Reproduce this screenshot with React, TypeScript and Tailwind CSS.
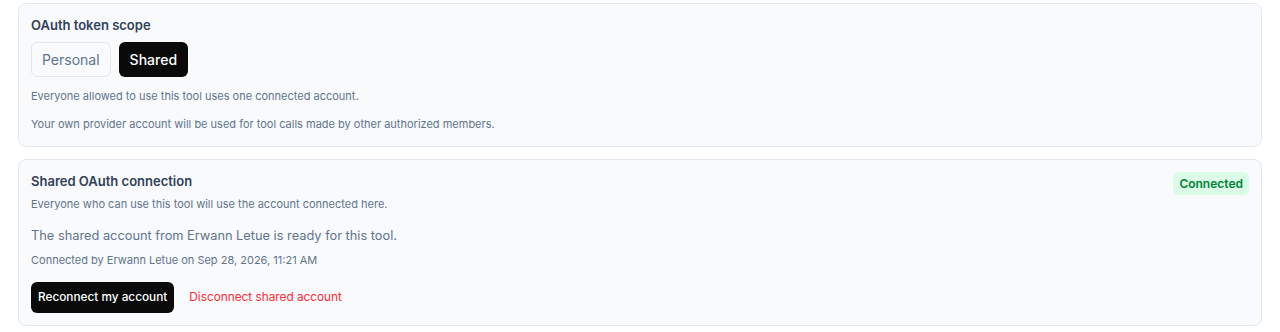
export default function App() {
  return (
    <div
      className="flex flex-col gap-3 px-[18px] pt-[3px] bg-white"
      style={{ fontFamily: "Inter, 'Noto Sans', sans-serif" }}
    >
      {/* Token scope */}
      <section className="rounded-lg border border-slate-200 bg-slate-50 px-3 pt-[11px] pb-[14px]">
        <h2 className="text-[13px] leading-5 font-semibold text-slate-700">OAuth token scope</h2>
        <div className="mt-[7px] flex gap-2">
          <button className="h-[35px] rounded-md border border-slate-200 bg-slate-50 px-[10px] text-sm text-slate-500">
            Personal
          </button>
          <button className="h-[35px] rounded-md bg-[#0a0a0a] px-[11px] text-sm font-medium text-white">
            Shared
          </button>
        </div>
        <p className="mt-[11px] text-[11px] leading-4 text-slate-500">
          Everyone allowed to use this tool uses one connected account.
        </p>
        <p className="mt-3 text-[11px] leading-4 text-slate-500">
          Your own provider account will be used for tool calls made by other authorized members.
        </p>
      </section>

      {/* Shared connection */}
      <section className="rounded-lg border border-slate-200 bg-slate-50 px-3 pt-[11px] pb-3">
        <div className="flex items-start justify-between">
          <div>
            <h2 className="text-[13px] leading-5 font-semibold text-slate-700">Shared OAuth connection</h2>
            <p className="mt-[5px] text-[11px] leading-4 text-slate-500">
              Everyone who can use this tool will use the account connected here.
            </p>
          </div>
          <span className="mt-[1px] rounded-md bg-green-100 px-[6px] py-1 text-xs leading-[15px] font-semibold text-green-700">
            Connected
          </span>
        </div>
        <p className="mt-[14px] text-[12.8px] leading-5 text-slate-500">
          The shared account from Erwann Letue is ready for this tool.
        </p>
        <p className="mt-[6px] text-[11px] leading-4 text-slate-500">
          Connected by Erwann Letue on Sep 28, 2026, 11:21 AM
        </p>
        <div className="mt-[14px] flex items-center gap-[15px]">
          <button className="h-[31px] rounded-md bg-[#0a0a0a] px-[7px] text-[11.8px] font-medium text-white">
            Reconnect my account
          </button>
          <button className="text-[11.8px] text-red-500">Disconnect shared account</button>
        </div>
      </section>
    </div>
  );
}
